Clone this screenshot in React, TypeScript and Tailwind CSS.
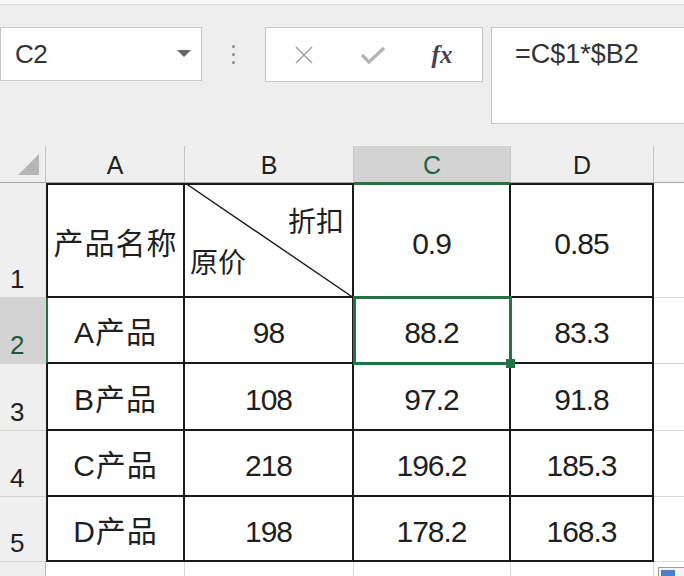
import React from "react";

const cell =
  "flex items-center justify-center pt-[6px] bg-white border-r-2 border-b-2 border-[#1a1a1a] text-[30px] leading-none tracking-[-1px]";
const cjk = "text-[28px] tracking-[1px]";
const rowHead =
  "flex items-end pl-[10px] pb-[5px] text-[26px] leading-none bg-[#efefef] border-b border-[#d4d4d4]";
const colHead =
  "flex items-center justify-center pt-[3px] text-[25px] leading-none bg-[#efefef] border-r border-b border-r-[#c4c4c4] border-b-[#a9a9a9]";
const eCell = "bg-white border-b border-[#dadada]";

export default function App() {
  return (
    <div className="w-[684px] h-[576px] overflow-hidden bg-[#eeeeee] text-[#1f1f1f] font-['Liberation_Sans','Noto_Sans_CJK_SC',sans-serif] relative">
      {/* Toolbar */}
      <div className="h-[146px] flex flex-col">
        <div className="h-[5px] bg-[#f7f7f7] border-b border-[#dcdcdc]" />
        <div className="flex items-start pt-[22px]">
          {/* Name box */}
          <div className="w-[202px] h-[54px] bg-white border border-[#c6c6c6] flex items-center justify-between pl-[14px] pr-[10px]">
            <span className="text-[26px] leading-none tracking-[-0.5px] text-[#333]">C2</span>
            <svg width="14" height="8" viewBox="0 0 14 8">
              <polygon points="0,0 14,0 7,7" fill="#666" />
            </svg>
          </div>
          {/* dots */}
          <div className="w-[63px] h-[54px] flex flex-col items-center justify-center gap-[5px]">
            <div className="w-[3px] h-[3px] rounded-full bg-[#8c8c8c]" />
            <div className="w-[3px] h-[3px] rounded-full bg-[#8c8c8c]" />
            <div className="w-[3px] h-[3px] rounded-full bg-[#8c8c8c]" />
          </div>
          {/* function buttons */}
          <div className="w-[218px] h-[55px] bg-white border border-[#c6c6c6] flex items-center">
            <div className="w-[73px] flex justify-center pl-[2px]">
              <svg width="20" height="20" viewBox="0 0 20 20">
                <path d="M2 2 L18 18 M18 2 L2 18" stroke="#a4a4a4" strokeWidth="1.6" fill="none" />
              </svg>
            </div>
            <div className="w-[68px] flex justify-center">
              <svg width="26" height="20" viewBox="0 0 26 20">
                <polyline points="2,10 9,17 24,3" stroke="#b4b4b4" strokeWidth="3.2" fill="none" />
              </svg>
            </div>
            <div className="w-[70px] flex justify-center">
              <span className="font-['Liberation_Serif',serif] italic font-bold text-[25px] leading-none text-[#4b3f52]">
                fx
              </span>
            </div>
          </div>
          <div className="w-[8px]" />
          {/* formula box */}
          <div className="flex-1 h-[97px] bg-white border border-r-0 border-[#c6c6c6] pl-[23px] pt-[11px]">
            <span className="text-[27px] leading-[30px] text-[#333]">=C$1*$B2</span>
          </div>
        </div>
      </div>

      {/* Sheet */}
      <div className="grid grid-cols-[46px_139px_169px_157px_143px_30px] grid-rows-[37px_115px_66px_67px_66px_65px_14px]">
        {/* header row */}
        <div className="flex items-end justify-end pr-[6px] pb-[7px] bg-[#efefef] border-r border-b border-r-[#c4c4c4] border-b-[#a9a9a9]">
          <svg width="21" height="21" viewBox="0 0 21 21">
            <polygon points="21,0 21,21 0,21" fill="#b6b6b6" />
          </svg>
        </div>
        <div className={colHead}>A</div>
        <div className={colHead}>B</div>
        <div className="flex items-center justify-center pt-[3px] text-[25px] leading-none bg-[#d3d3d3] text-[#1e6545] border-r border-b border-r-[#c4c4c4] border-b-[#217346]">
          C
        </div>
        <div className={colHead}>D</div>
        <div className="bg-[#efefef] border-b border-[#a9a9a9]" />

        {/* row 1 */}
        <div className={rowHead}>1</div>
        <div className={`${cell} ${cjk} border-t-2 border-l-2`}>产品名称</div>
        <div className="relative bg-white border-t-2 border-r-2 border-b-2 border-[#1a1a1a] flex flex-col justify-between pt-[24px] pb-[18px] pl-[5px] pr-[8px] text-[28px] leading-none">
          <svg
            className="absolute -top-[2px] left-0 -right-[2px] -bottom-[2px] w-[calc(100%+2px)] h-[calc(100%+4px)]"
            viewBox="0 0 100 100"
            preserveAspectRatio="none"
          >
            <line x1="0" y1="0" x2="100" y2="100" stroke="#1a1a1a" strokeWidth="1.4" vectorEffect="non-scaling-stroke" />
          </svg>
          <span className="self-end">折扣</span>
          <span className="self-start">原价</span>
        </div>
        <div className={`${cell} border-t-2 border-t-[#217346]`}>0.9</div>
        <div className={`${cell} border-t-2`}>0.85</div>
        <div className={eCell} />

        {/* row 2 */}
        <div className="flex items-end pl-[10px] pb-[5px] text-[26px] leading-none bg-[#d3d3d3] text-[#1e5a3e] border-b border-[#d4d4d4]">
          2
        </div>
        <div className={`${cell} ${cjk} border-l-2 border-l-[#217346]`}>A产品</div>
        <div className={cell}>98</div>
        <div className={`${cell} relative`}>
          <span>88.2</span>
          <div className="absolute -top-[2px] -left-[1px] -right-[3px] -bottom-[3px] border-[3px] border-[#217346] z-10">
            <div className="absolute -right-[6px] -bottom-[6px] w-[9px] h-[9px] bg-[#217346]" />
          </div>
        </div>
        <div className={cell}>83.3</div>
        <div className={eCell} />

        {/* row 3 */}
        <div className={rowHead}>3</div>
        <div className={`${cell} ${cjk} border-l-2`}>B产品</div>
        <div className={cell}>108</div>
        <div className={cell}>97.2</div>
        <div className={cell}>91.8</div>
        <div className={eCell} />

        {/* row 4 */}
        <div className={rowHead}>4</div>
        <div className={`${cell} ${cjk} border-l-2`}>C产品</div>
        <div className={cell}>218</div>
        <div className={cell}>196.2</div>
        <div className={cell}>185.3</div>
        <div className={eCell} />

        {/* row 5 */}
        <div className={rowHead}>5</div>
        <div className={`${cell} ${cjk} border-l-2`}>D产品</div>
        <div className={cell}>198</div>
        <div className={cell}>178.2</div>
        <div className={cell}>168.3</div>
        <div className={eCell} />

        {/* row 6 */}
        <div className="bg-[#efefef] border-r border-[#bdbdbd]" />
        <div className="bg-white border-r border-[#d8d8d8]" />
        <div className="bg-white border-r border-[#d8d8d8]" />
        <div className="bg-white border-r border-[#d8d8d8]" />
        <div className="bg-white border-r border-[#d8d8d8]" />
        <div className="bg-white" />
      </div>

      {/* paste options button */}
      <div className="absolute left-[658px] top-[567px] w-[28px] h-[14px] bg-[#f4f4f4] border border-[#9c9c9c] p-[2px]">
        <div className="w-[14px] h-[8px] bg-[#4a7fc8]" />
      </div>
    </div>
  );
}
